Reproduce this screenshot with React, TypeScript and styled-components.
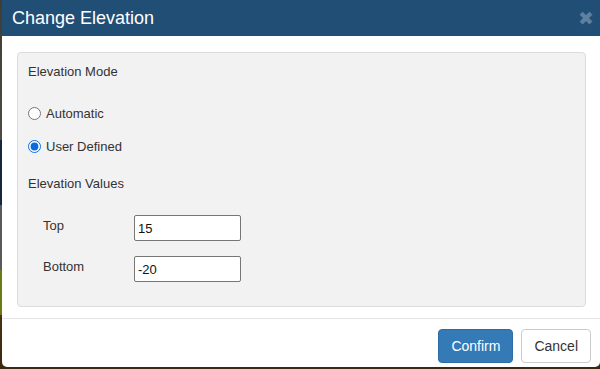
import React from "react";
import styled, { createGlobalStyle } from "styled-components";

const Global = createGlobalStyle`
  html, body { margin: 0; padding: 0; }
  body { font-family: "Liberation Sans", Arial, sans-serif; color: #333; }
`;

const Page = styled.div`
  width: 600px;
  height: 369px;
  display: flex;
  align-items: flex-start;
  background: linear-gradient(
    to bottom,
    #3e3e36 0px, #4b4b40 140px,
    #16263c 140px, #16263c 205px,
    #5a5a5a 205px, #5a5a5a 270px,
    #6b7a12 270px, #6b7a12 315px,
    #4a3212 315px, #3a2810 369px
  );
  overflow: hidden;
`;

const Modal = styled.div`
  margin-left: 2px;
  width: 598px;
  height: 367px;
  background: #fff;
  border-radius: 0 0 5px 5px;
  display: flex;
  flex-direction: column;
`;

const Header = styled.div`
  height: 36px;
  box-sizing: border-box;
  background: #214e75;
  display: flex;
  align-items: center;
  justify-content: space-between;
  padding: 0 8px 0 10px;
  margin-right: -2px;
`;

const Title = styled.h4`
  margin: 0;
  font-size: 18px;
  font-weight: normal;
  color: #fff;
  line-height: 20px;
`;

const Close = styled.span`
  font-family: "DejaVu Sans", "Liberation Sans", sans-serif;
  font-size: 19px;
  font-weight: bold;
  line-height: 1;
  color: #5f80a0;
  margin-top: 0px;
`;

const Body = styled.div`
  padding: 16px 14px 10px 15px;
`;

const Panel = styled.div`
  height: 255px;
  box-sizing: border-box;
  background: #f2f2f2;
  border: 1px solid #dcdcdc;
  border-radius: 4px;
  padding: 9px 10px;
  display: flex;
  flex-direction: column;
`;

const SectionTitle = styled.div<{ $mt?: number }>`
  font-size: 13px;
  line-height: 20px;
  margin-top: ${(p) => p.$mt ?? 0}px;
`;

const RadioRow = styled.label<{ $mt: number }>`
  display: flex;
  align-items: center;
  height: 20px;
  font-size: 13px;
  margin-top: ${(p) => p.$mt}px;
  cursor: pointer;
`;

const Radio = styled.input`
  width: 13px;
  height: 13px;
  margin: 0 5px 0 0;
  accent-color: #0b6bdb;
`;

const FieldRow = styled.div<{ $mt: number }>`
  display: flex;
  align-items: center;
  margin-top: ${(p) => p.$mt}px;
  padding-left: 15px;
`;

const FieldLabel = styled.span`
  width: 91px;
  font-size: 13px;
  margin-top: -6px;
`;

const Input = styled.input`
  width: 107px;
  height: 26px;
  box-sizing: border-box;
  border: 1px solid #767676;
  border-radius: 2px;
  padding: 0 3px;
  font-family: "Liberation Sans", Arial, sans-serif;
  font-size: 13px;
  color: #111;
  background: #fff;
`;

const Footer = styled.div`
  border-top: 1px solid #e5e5e5;
  margin-top: 1px;
  padding: 10px 9px 0 0;
  display: flex;
  justify-content: flex-end;
  gap: 8px;
`;

const Button = styled.button<{ $primary?: boolean }>`
  height: 34px;
  padding: 0 12px;
  font-family: "Liberation Sans", Arial, sans-serif;
  font-size: 14px;
  border-radius: 4px;
  border: 1px solid ${(p) => (p.$primary ? "#2e6da4" : "#ccc")};
  background: ${(p) => (p.$primary ? "#337ab7" : "#fff")};
  color: ${(p) => (p.$primary ? "#fff" : "#333")};
  cursor: pointer;
`;

export default function App() {
  return (
    <>
      <Global />
      <Page>
        <Modal>
          <Header>
            <Title>Change Elevation</Title>
            <Close>✖</Close>
          </Header>
          <Body>
            <Panel>
              <SectionTitle>Elevation Mode</SectionTitle>
              <RadioRow $mt={21}>
                <Radio type="radio" name="mode" />
                Automatic
              </RadioRow>
              <RadioRow $mt={13}>
                <Radio type="radio" name="mode" defaultChecked />
                User Defined
              </RadioRow>
              <SectionTitle $mt={18}>Elevation Values</SectionTitle>
              <FieldRow $mt={21}>
                <FieldLabel>Top</FieldLabel>
                <Input defaultValue="15" />
              </FieldRow>
              <FieldRow $mt={15}>
                <FieldLabel>Bottom</FieldLabel>
                <Input defaultValue="-20" />
              </FieldRow>
            </Panel>
          </Body>
          <Footer>
            <Button $primary>Confirm</Button>
            <Button>Cancel</Button>
          </Footer>
        </Modal>
      </Page>
    </>
  );
}
